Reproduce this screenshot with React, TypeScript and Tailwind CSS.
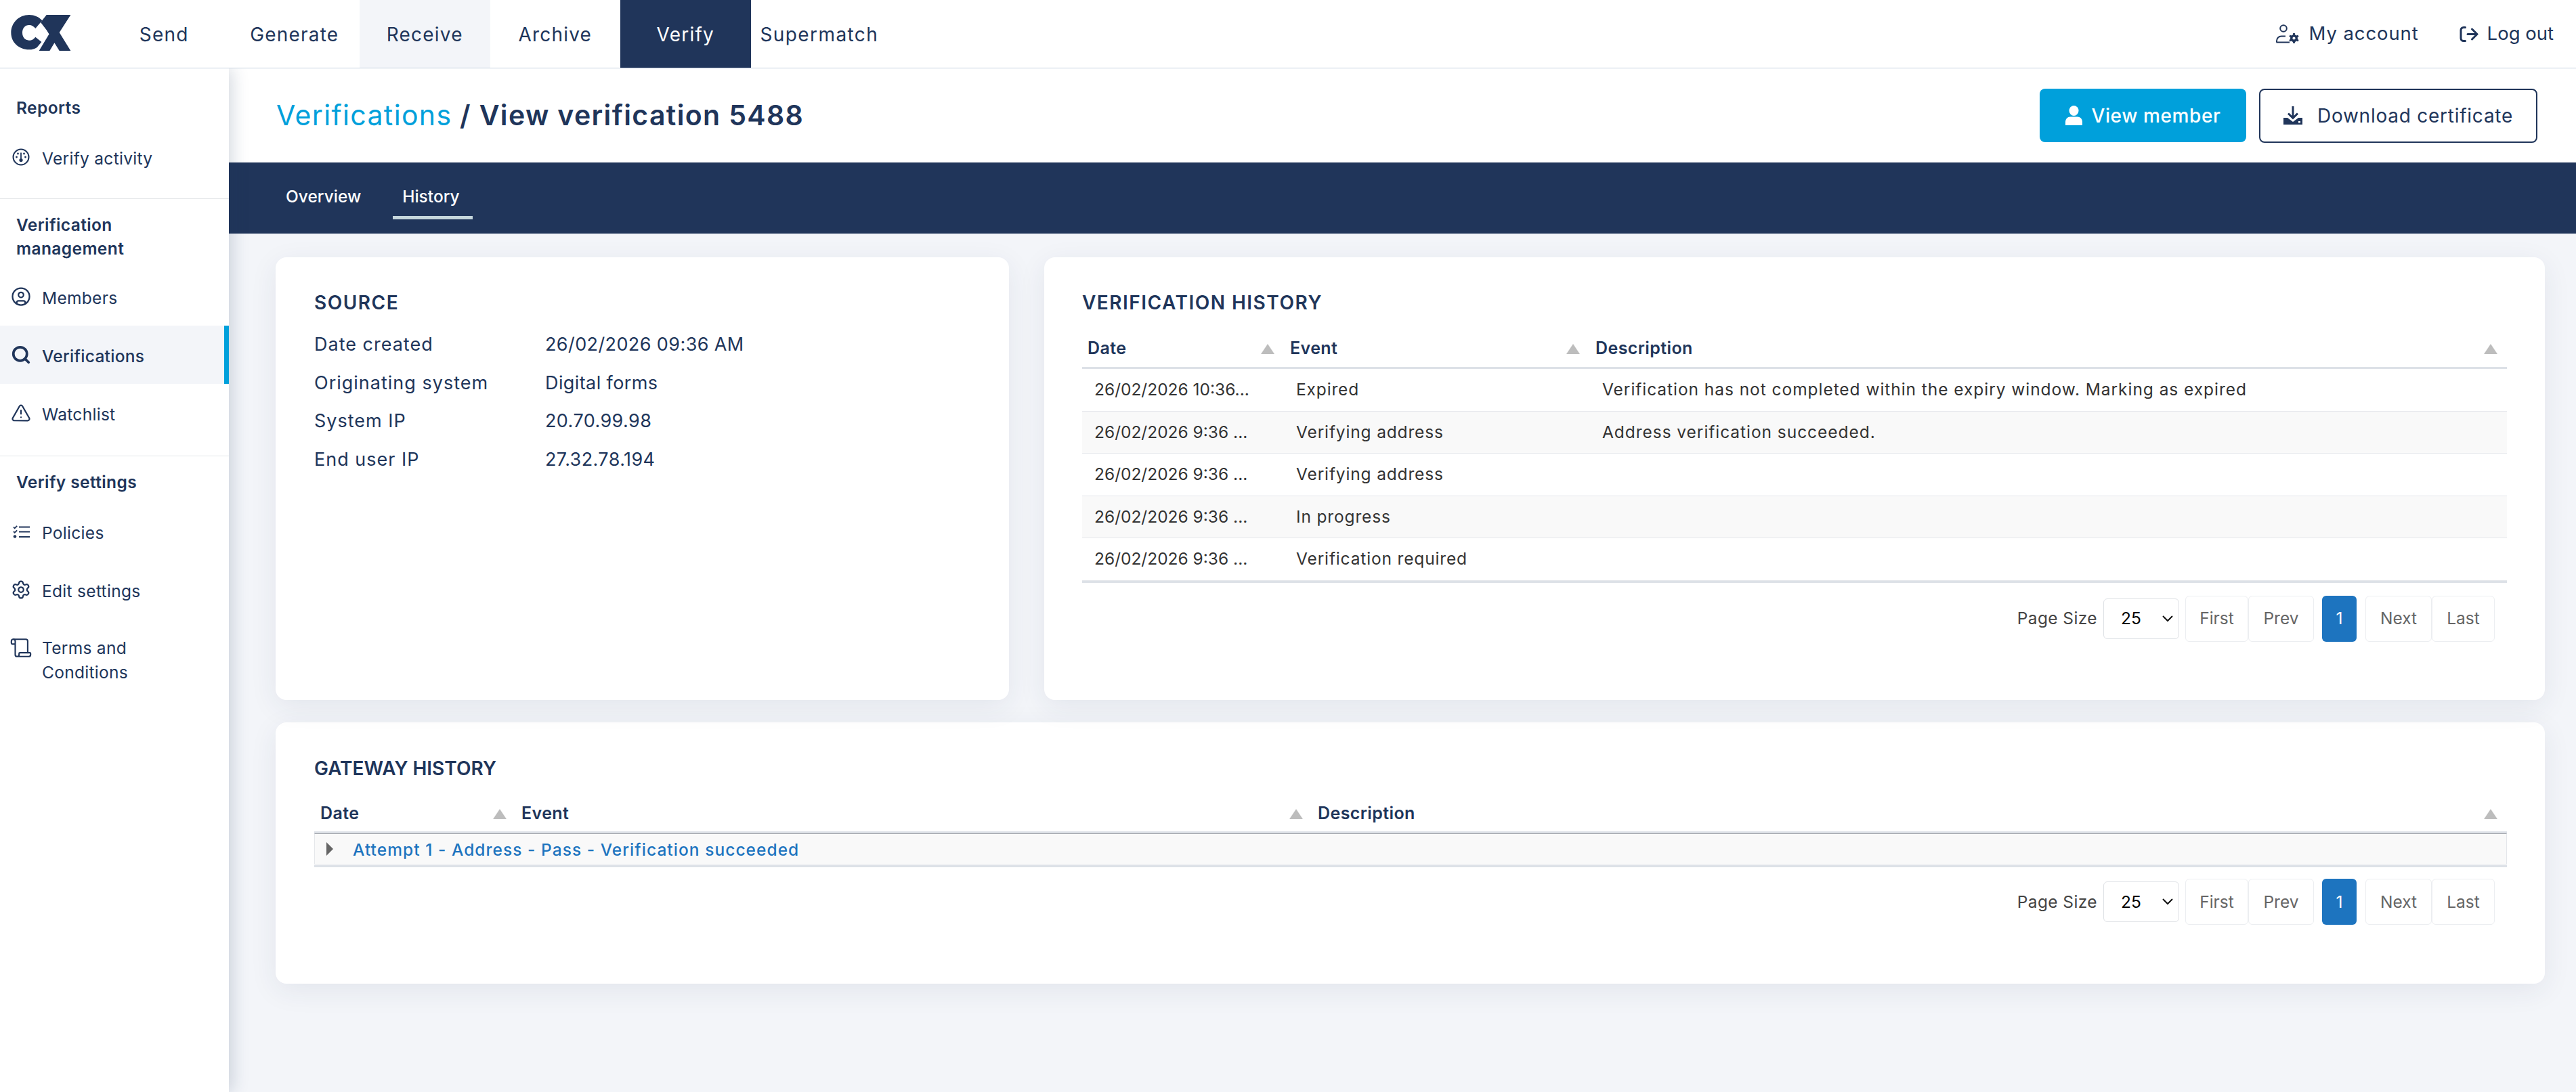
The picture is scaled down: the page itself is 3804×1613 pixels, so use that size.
import { CircleUser, Search, TriangleAlert, Settings, Scroll } from 'lucide-react'

const rows = [
    { date: '26/02/2026 10:36...', event: 'Expired', description: 'Verification has not completed within the expiry window. Marking as expired' },
    { date: '26/02/2026 9:36 ...', event: 'Verifying address', description: 'Address verification succeeded.' },
    { date: '26/02/2026 9:36 ...', event: 'Verifying address', description: '' },
    { date: '26/02/2026 9:36 ...', event: 'In progress', description: '' },
    { date: '26/02/2026 9:36 ...', event: 'Verification required', description: '' },
]

const sourceRows = [
    ['Date created', '26/02/2026 09:36 AM'],
    ['Originating system', 'Digital forms'],
    ['System IP', '20.70.99.98'],
    ['End user IP', '27.32.78.194'],
]

function Logo() {
    return (
        <svg width="89" height="53" viewBox="48 66 265 159" fill="#20355a" className="shrink-0">
            <path d="M128 66c24 0 43 9 58 25l-30 35c-7-9-16-15-28-15-18 0-30 14-30 34s12 34 30 34c12 0 21-6 28-15l27 22-20 24c-10 7-22 10-35 10-46 0-80-32-80-75s34-79 80-79z" />
            <path d="M205 66h107l-50 78 50 81h-50l-57-92-26-34z M172 225l47-78 24 38-24 40z" />
        </svg>
    )
}

function AccountIcon() {
    return (
        <svg width="35" height="28" viewBox="0 0 35 28" fill="none" stroke="#20355a" strokeWidth="2" className="shrink-0">
            <circle cx="12" cy="6" r="4.800" />
            <path d="M2 26.500v-2c0-4 3-7 7-7h6M1.500 26.500H21" />
            <circle cx="27.500" cy="20.500" r="3.800" strokeWidth="3.400" />
            <path d="M27.500 13v3M27.500 25v3M21 16.700l2.600 1.500M31.400 22.800l2.600 1.500M34 16.700l-2.600 1.500M23.600 22.800 21 24.300" strokeWidth="2.800" />
        </svg>
    )
}

function LogoutIcon() {
    return (
        <svg width="28" height="23" viewBox="0 0 28 23" fill="none" stroke="#20355a" strokeWidth="3" strokeLinecap="round" strokeLinejoin="round" className="shrink-0">
            <path d="M8.500 1.500H6a4 4 0 0 0-4 4v12a4 4 0 0 0 4 4h2.500" />
            <path d="M12 11.500h14M18.500 4l7.500 7.500-7.500 7.500" />
        </svg>
    )
}

function ActivityIcon() {
    return (
        <svg width="26" height="26" viewBox="0 0 26 26" fill="#20355a" className="shrink-0">
            <circle cx="13" cy="13" r="11.500" fill="none" stroke="#20355a" strokeWidth="2" />
            <path d="M13 6.500v9" fill="none" stroke="#20355a" strokeWidth="1.800" />
            <circle cx="13" cy="17.500" r="2.600" />
            <circle cx="6.500" cy="13" r="1.400" />
            <circle cx="19.500" cy="13" r="1.400" />
            <circle cx="8.500" cy="8" r="1.400" />
            <circle cx="17.500" cy="8" r="1.400" />
        </svg>
    )
}

function PoliciesIcon() {
    return (
        <svg width="25" height="19" viewBox="0 0 25 19" fill="none" stroke="#20355a" strokeWidth="1.800" className="shrink-0">
            <path d="M1 2.500 2.700 4.200 6.200 .8M1 9 2.700 10.700 6.200 7.300" />
            <path d="M9 2.500h16M9 9.500h16M9 17h16" strokeWidth="2.200" />
            <circle cx="3" cy="16.500" r="2.300" fill="#20355a" stroke="none" />
        </svg>
    )
}

function PersonIcon() {
    return (
        <svg width="25" height="29" viewBox="0 0 25 29" fill="#ffffff" className="shrink-0">
            <ellipse cx="12.500" cy="7.500" rx="7" ry="7.500" />
            <path d="M0 29v-5c0-4.500 3.500-7.500 7-7.500h11c3.500 0 7 3 7 7.500v5z" />
        </svg>
    )
}

function DownloadIcon() {
    return (
        <svg width="28" height="27" viewBox="0 0 28 27" fill="none" className="shrink-0">
            <path d="M14 0v17M7 10.500 14 17.500l7-7" stroke="#20355a" strokeWidth="3" />
            <path d="M0 17h6l8 6 8-6h6v10H0z" fill="#20355a" />
            <rect x="22" y="22" width="3" height="2.500" fill="#ffffff" />
        </svg>
    )
}

function SortArrow() {
    return <span className="h-0 w-0 shrink-0 border-x-[10px] border-b-[15px] border-x-transparent border-b-[#bdbdbd]" />
}

function NavItem({ label, className }: { label: string; className?: string }) {
    return <a className={`flex h-full w-[192.5px] items-center justify-center pt-[2px] text-[28px] tracking-[1.2px] ${className ?? 'text-[#20355a]'}`}>{label}</a>
}

function SideHeading({ children }: { children: React.ReactNode }) {
    return <p className="pl-6 text-[24.5px] leading-[35px] font-semibold tracking-[0.4px] text-[#20355a]">{children}</p>
}

function SideItem({ icon, label, active }: { icon: React.ReactNode; label: React.ReactNode; active?: boolean }) {
    return (
        <a className={`flex h-[86px] items-center text-[24.5px] leading-[36px] tracking-[0.3px] text-[#20355a] ${active ? 'border-r-[7px] border-[#00a0db] bg-[#f3f5f9] font-medium' : ''}`}>
            <span className="flex w-[62px] shrink-0 justify-center">{icon}</span>
            <span className="pt-[3px]">{label}</span>
        </a>
    )
}

function Pagination({ className }: { className?: string }) {
    const btn = 'flex h-[68px] items-center justify-center rounded-md border border-[#eceef1] text-[#666666]'
    return (
        <div className={`flex items-center justify-end pr-[18px] text-[24.5px] ${className ?? ''}`}>
            <span className="mr-[9px] tracking-[0.4px] text-[#444444]">Page Size</span>
            <div className="mr-[9px] flex h-[60px] w-[112px] items-center justify-between rounded-md border border-[#dfe2e6] pr-[8px] pl-[25px] text-black">
                25
                <svg width="16" height="10" viewBox="0 0 16 10" fill="none" stroke="#111111" strokeWidth="2"><path d="M1 1l7 7 7-7" /></svg>
            </div>
            <span className={`${btn} w-[93px]`}>First</span>
            <span className={`${btn} mr-[12px] w-[97px]`}>Prev</span>
            <span className="mr-[13px] flex h-[68px] w-[51px] items-center justify-center rounded-md bg-[#1d74bf] text-white">1</span>
            <span className={`${btn} w-[98px]`}>Next</span>
            <span className={`${btn} w-[93px]`}>Last</span>
        </div>
    )
}

export default function App() {
    return (
        <div className="flex min-h-screen flex-col bg-[#f3f5f9] font-[Inter,sans-serif]">
            {/* Top nav */}
            <header className="relative z-20 flex h-[101px] shrink-0 items-center border-b border-[#c3d0de] bg-white">
                <div className="flex h-full w-[146px] shrink-0 items-center pb-[4px] pl-4">
                    <Logo />
                </div>
                <nav className="flex h-full">
                    <NavItem label="Send" />
                    <NavItem label="Generate" />
                    <NavItem label="Receive" className="bg-[#f3f5f9] text-[#20355a]" />
                    <NavItem label="Archive" />
                    <NavItem label="Verify" className="bg-[#20355a] text-white" />
                    <a className="flex items-center px-[14px] pt-[2px] text-[28px] tracking-[1.4px] text-[#20355a]">Supermatch</a>
                </nav>
                <div className="ml-auto flex items-center pr-[33px] text-[27.5px] text-[#20355a]">
                    <AccountIcon />
                    <span className="mr-[60px] ml-[15px] tracking-[0.9px]">My account</span>
                    <LogoutIcon />
                    <span className="ml-[13px]">Log out</span>
                </div>
            </header>

            <div className="flex flex-1">
                {/* Sidebar */}
                <aside className="relative z-10 w-[338px] shrink-0 bg-white pt-[41px] shadow-[4px_0_24px_rgba(32,53,90,0.2)]">
                    <SideHeading>Reports</SideHeading>
                    <div className="mt-[12px] pb-[18px]">
                        <SideItem icon={<ActivityIcon />} label="Verify activity" />
                    </div>
                    <div className="border-t border-[#e3e5e8] pt-[21px]">
                        <SideHeading>Verification<br />management</SideHeading>
                        <div className="mt-[10px]">
                            <SideItem icon={<CircleUser size={30} strokeWidth={1.8} />} label="Members" />
                            <SideItem active icon={<Search size={30} strokeWidth={3} />} label="Verifications" />
                            <SideItem icon={<TriangleAlert size={30} strokeWidth={1.8} />} label="Watchlist" />
                        </div>
                    </div>
                    <div className="mt-[20px] border-t border-[#e3e5e8] pt-[21px]">
                        <SideHeading>Verify settings</SideHeading>
                        <div className="mt-[12px]">
                            <SideItem icon={<PoliciesIcon />} label="Policies" />
                            <SideItem icon={<Settings size={30} strokeWidth={1.8} />} label="Edit settings" />
                            <div className="pt-[25px]">
                                <a className="flex text-[24.5px] leading-[36px] tracking-[0.3px] text-[#20355a]">
                                    <span className="flex h-[36px] w-[62px] shrink-0 items-center justify-center"><Scroll size={34} strokeWidth={1.5} /></span>
                                    <span>Terms and<br />Conditions</span>
                                </a>
                            </div>
                        </div>
                    </div>
                </aside>

                <main className="min-w-0 flex-1">
                    <div className="flex h-[139px] items-center justify-between bg-white pr-[57px] pl-[70px]">
                        <h1 className="text-[41px] font-semibold tracking-[1.35px] text-[#20355a]">
                            <span className="font-normal text-[#00a0db]">Verifications</span> / View verification 5488
                        </h1>
                        <div className="flex items-center gap-[19px]">
                            <button className="flex h-[79px] w-[305px] items-center justify-center gap-[14px] rounded-lg bg-[#00a0db] text-[28px] font-medium tracking-[0.6px] text-white">
                                <PersonIcon />
                                View member
                            </button>
                            <button className="flex h-[80px] w-[411px] items-center justify-center gap-[22px] rounded-lg border-2 border-[#20355a] text-[28px] tracking-[0.75px] text-[#20355a]">
                                <DownloadIcon />
                                Download certificate
                            </button>
                        </div>
                    </div>
                    <div className="flex h-[105px] bg-[#20355a] pl-[84px] text-[24.5px] font-medium text-white">
                        <a className="mr-[61px] flex items-center pb-[5px]">Overview</a>
                        <a className="relative flex items-center pb-[5px]">
                            History
                            <span className="absolute top-[79px] -right-[19px] -left-[14px] h-[5px] bg-[#c5d6dc]" />
                        </a>
                    </div>

                    <div className="pt-[35px] pr-[46px] pl-[69px]">
                        <div className="grid grid-cols-[1083px_1fr] gap-[52px]">
                            <section className="h-[654px] rounded-2xl bg-white px-[57px] pt-[48px] shadow-[0_10px_40px_rgba(32,53,90,0.08)]">
                                <h2 className="text-[28px] leading-[38px] font-semibold tracking-[1.5px] text-[#20355a]">SOURCE</h2>
                                <dl className="mt-[15px] text-[27px] leading-[56.5px] text-[#20355a]">
                                    {sourceRows.map(([label, value]) => (
                                        <div key={label} className="flex">
                                            <dt className="w-[341px] shrink-0 tracking-[1px]">{label}</dt>
                                            <dd className="tracking-[0.4px]">{value}</dd>
                                        </div>
                                    ))}
                                </dl>
                            </section>

                            <section className="h-[654px] rounded-2xl bg-white pt-[48px] pr-[56px] pl-[56px] shadow-[0_10px_40px_rgba(32,53,90,0.08)]">
                                <h2 className="text-[28px] leading-[38px] font-semibold tracking-[1.5px] text-[#20355a]">VERIFICATION HISTORY</h2>
                                <div className="mt-[16px] flex h-[63px] items-center border-b-[3px] border-[#dde1e7] pt-[6px] text-[25px] font-semibold tracking-[0.4px] text-[#20355a]">
                                    <div className="flex w-[307px] items-center justify-between pr-[23px] pl-[8px]">Date <SortArrow /></div>
                                    <div className="flex w-[451px] items-center justify-between pr-[23px]">Event <SortArrow /></div>
                                    <div className="flex flex-1 items-center justify-between pr-[14px]">Description <SortArrow /></div>
                                </div>
                                <div className="border-b-[3px] border-[#dde1e7] text-[24.5px] text-[#333333]">
                                    {rows.map((row, i) => (
                                        <div key={i} className={`flex h-[62.5px] items-center border-b border-[#e5e7eb] ${i % 2 === 1 ? 'bg-[#f9f9f9]' : ''}`}>
                                            <div className="w-[307px] pl-[18px]">{row.date}</div>
                                            <div className="w-[451px] pl-[9px] tracking-[0.85px]">{row.event}</div>
                                            <div className="flex-1 pl-[10px] tracking-[0.95px]">{row.description}</div>
                                        </div>
                                    ))}
                                </div>
                                <Pagination className="mt-[19px]" />
                            </section>
                        </div>

                        <section className="mt-[33px] h-[386px] rounded-2xl bg-white pt-[49px] pr-[56px] pl-[57px] shadow-[0_10px_40px_rgba(32,53,90,0.08)]">
                            <h2 className="text-[28px] leading-[38px] font-semibold text-[#20355a]">GATEWAY HISTORY</h2>
                            <div className="mt-[14px] flex h-[60px] items-center pt-[8px] text-[25px] font-semibold tracking-[0.4px] text-[#20355a]">
                                <div className="flex w-[306px] items-center justify-between pr-[22px] pl-[9px]">Date <SortArrow /></div>
                                <div className="flex w-[1176px] items-center justify-between pr-[22px]">Event <SortArrow /></div>
                                <div className="flex flex-1 items-center justify-between pr-[14px]">Description <SortArrow /></div>
                            </div>
                            <div className="border-t-[3px] border-[#dde1e7]">
                                <div className="flex h-[46px] items-center border-x border-t border-b border-t-[#9a9ea5] border-x-[#e5e7eb] border-b-[#e5e7eb] bg-[#f9f9f9] pl-[17px] text-[24.5px] font-medium tracking-[1.05px] text-[#1d74bf]">
                                    <span className="mr-[29px] h-0 w-0 border-y-[10px] border-l-[10px] border-y-transparent border-l-[#666666]" />
                                    <span className="pt-[2px]">Attempt 1 - Address - Pass - Verification succeeded</span>
                                </div>
                                <div className="mt-[1px] h-[3px] bg-[#dde1e7]" />
                            </div>
                            <Pagination className="mt-[17px]" />
                        </section>
                    </div>
                </main>
            </div>
        </div>
    )
}
